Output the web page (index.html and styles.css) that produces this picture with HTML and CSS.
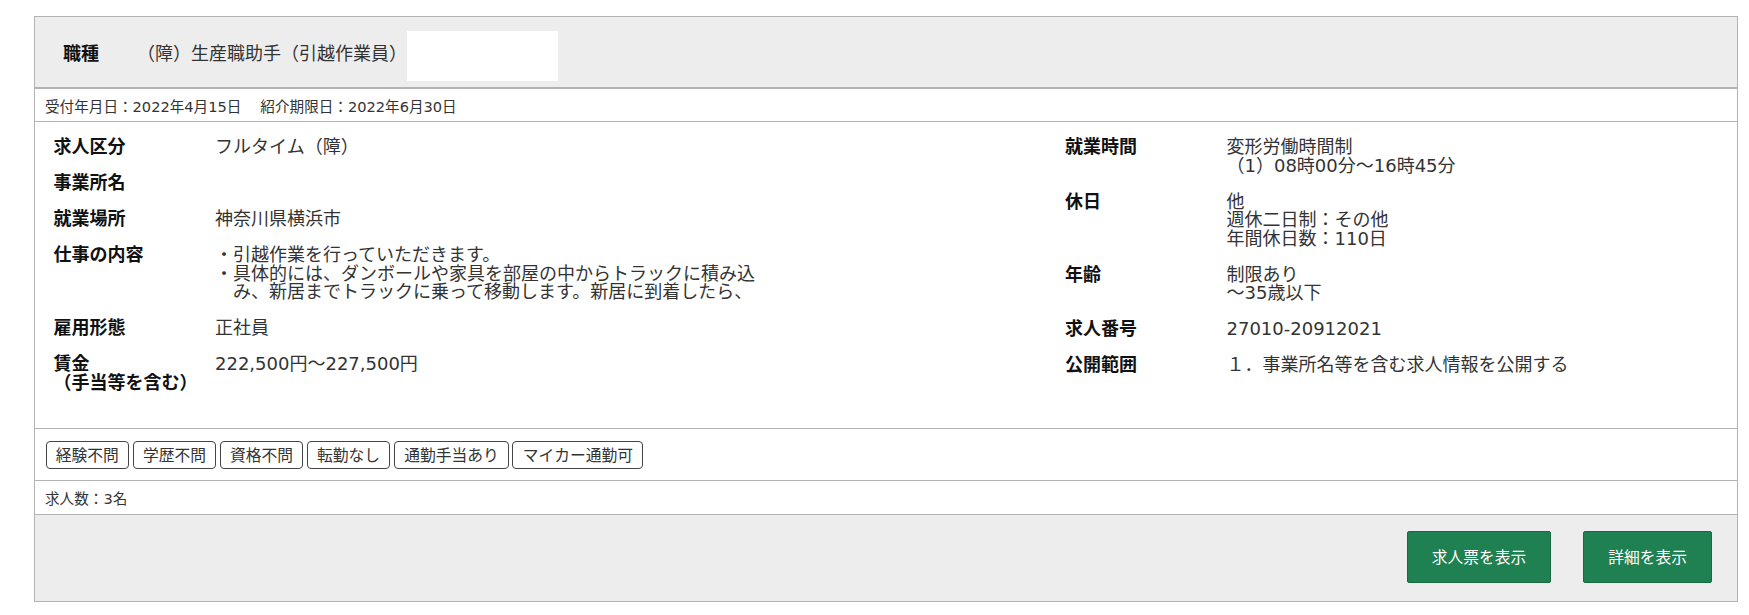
FILE: index.html
```html
<!DOCTYPE html>
<html>
<head lang="ja">
    <meta charset="UTF-8">
    <title>求人情報</title>
    <link rel="stylesheet" href="styles.css">
</head>
<body>
<div class="wrap">
    <div class="head">
        <span class="head-label">職種</span>
        <span class="head-value">（障）生産職助手（引越作業員）</span>
        <span class="mask"></span>
    </div>
    <div class="dates">
        <span>受付年月日：2022年4月15日</span>
        <span class="dates-next">紹介期限日：2022年6月30日</span>
    </div>
    <div class="main">
        <dl class="col col-left">
            <dt>求人区分</dt>
            <dd>フルタイム（障）</dd>
            <dt>事業所名</dt>
            <dd></dd>
            <dt>就業場所</dt>
            <dd>神奈川県横浜市</dd>
            <dt>仕事の内容</dt>
            <dd>
                <div class="bullet">・引越作業を行っていただきます。</div>
                <div class="bullet">・具体的には、ダンボールや家具を部屋の中からトラックに積み込<br>み、新居までトラックに乗って移動します。新居に到着したら、</div>
            </dd>
            <dt>雇用形態</dt>
            <dd>正社員</dd>
            <dt>賃金<br>（手当等を含む）</dt>
            <dd>222,500円～227,500円</dd>
        </dl>
        <dl class="col col-right">
            <dt>就業時間</dt>
            <dd>変形労働時間制<br>（1）08時00分～16時45分</dd>
            <dt>休日</dt>
            <dd>他<br>週休二日制：その他<br>年間休日数：110日</dd>
            <dt>年齢</dt>
            <dd>制限あり<br>～35歳以下</dd>
            <dt>求人番号</dt>
            <dd>27010-20912021</dd>
            <dt>公開範囲</dt>
            <dd>１．事業所名等を含む求人情報を公開する</dd>
        </dl>
    </div>
    <div class="tags">
        <span class="tag">経験不問</span>
        <span class="tag">学歴不問</span>
        <span class="tag">資格不問</span>
        <span class="tag">転勤なし</span>
        <span class="tag">通勤手当あり</span>
        <span class="tag">マイカー通勤可</span>
    </div>
    <div class="count">求人数：3名</div>
    <div class="foot">
        <a class="btn" href="#">求人票を表示</a>
        <a class="btn" href="#">詳細を表示</a>
    </div>
</div>
</body>
</html>
```

FILE: styles.css
```css
* {
    margin: 0;
    padding: 0;
    box-sizing: border-box;
}

body {
    background: #fff;
    color: #333;
    font-family: "DejaVu Sans", "Noto Sans CJK JP", sans-serif;
}

.wrap {
    width: 1704px;
    margin: 16px 0 0 34px;
    border: 1px solid #b3b3b3;
}

/* 職種 */
.head {
    height: 72px;
    display: flex;
    align-items: center;
    padding-left: 28px;
    background: #ededed;
    border-bottom: 2px solid #b3b3b3;
    font-size: 18px;
    font-family: "Noto Sans CJK JP", sans-serif;
}

.head-label {
    font-weight: bold;
    color: #111;
    width: 74px;
}

.head-value {
    color: #333;
}

.mask {
    width: 151px;
    height: 50px;
    background: #fff;
    margin-top: 8px;
}

.dates,
.count {
    display: flex;
    align-items: center;
    padding-left: 10px;
    font-size: 14.6px;
    color: #333;
    border-bottom: 1px solid #b3b3b3;
}

.dates {
    height: 33px;
}

.dates-next {
    margin-left: 19px;
}

/* 求人の内容 */
.main {
    display: flex;
    height: 307px;
    padding: 16px 0 0 18.5px;
    border-bottom: 1px solid #b3b3b3;
    font-size: 18px;
    line-height: 18.5px;
}

.col {
    display: grid;
    grid-template-columns: 161.5px 1fr;
    row-gap: 17.5px;
    align-content: start;
}

.col-left {
    width: 1011.5px;
}

.col-right {
    flex: 1;
}

.col dt {
    font-weight: bold;
    color: #111;
}

.col dd {
    color: #333;
    min-height: 18.5px;
}

.bullet {
    padding-left: 1em;
    text-indent: -1em;
}

.tags {
    display: flex;
    gap: 3.5px;
    height: 52px;
    padding: 12px 0 0 10.5px;
    border-bottom: 1px solid #b3b3b3;
}

.tag {
    height: 28px;
    line-height: 26px;
    padding: 0 9.3px;
    border: 1px solid #444;
    border-radius: 4px;
    font-size: 15.75px;
    font-family: "Noto Sans CJK JP", sans-serif;
    color: #333;
}

.count {
    height: 34px;
}

.foot {
    display: flex;
    justify-content: flex-end;
    gap: 32px;
    height: 86px;
    padding: 16px 25px 0 0;
    background: #ededed;
}

.btn {
    height: 52px;
    line-height: 50px;
    padding: 0 24px;
    background: #1f8152;
    border: 1px solid #186a43;
    border-radius: 2px;
    color: #fff;
    text-decoration: none;
    font-size: 15.75px;
    font-family: "Noto Sans CJK JP", sans-serif;
}
```
